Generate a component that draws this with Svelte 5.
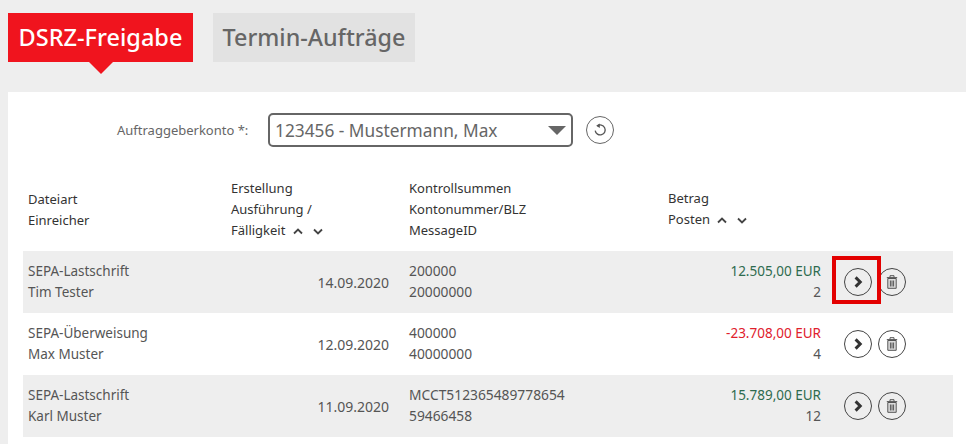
<script>
  const rows = [
    { type: 'SEPA-Lastschrift', name: 'Tim Tester', date: '14.09.2020', sum: '200000', blz: '20000000', amount: '12.505,00', count: 2, tone: 'pos', marked: true },
    { type: 'SEPA-Überweisung', name: 'Max Muster', date: '12.09.2020', sum: '400000', blz: '40000000', amount: '-23.708,00', count: 4, tone: 'neg', marked: false },
    { type: 'SEPA-Lastschrift', name: 'Karl Muster', date: '11.09.2020', sum: 'MCCT512365489778654', blz: '59466458', amount: '15.789,00', count: 12, tone: 'pos', marked: false }
  ];
</script>

{#snippet sort()}
  <span class="sort">
    <svg width="10" height="7" viewBox="0 0 10 7"><path d="M1 5.500 5 1.500l4 4" /></svg>
    <svg width="10" height="7" viewBox="0 0 10 7"><path d="M1 1.500l4 4 4-4" /></svg>
  </span>
{/snippet}

<div class="page">
  <nav class="tabs">
    <button class="tab active">DSRZ-Freigabe</button>
    <button class="tab">Termin-Aufträge</button>
  </nav>

  <main class="panel">
    <div class="filter">
      <label for="konto">Auftraggeberkonto *:</label>
      <div class="select" id="konto">
        <span>123456 - Mustermann, Max</span>
        <i class="caret"></i>
      </div>
      <button class="round reset" aria-label="Zurücksetzen">
        <svg width="16" height="16" viewBox="0 0 16 16">
          <path d="M5.200 3.900A5 5 0 1 1 3.200 8.600" />
          <path class="solid" d="M7.800 1.400v4.600L4.200 3.700z" />
        </svg>
      </button>
    </div>

    <div class="grid head">
      <div class="c1">Dateiart<br />Einreicher</div>
      <div class="c2">Erstellung<br />Ausführung /<br />Fälligkeit {@render sort()}</div>
      <div class="c3">Kontrollsummen<br />Kontonummer/BLZ<br />MessageID</div>
      <div class="c4">Betrag<br />Posten {@render sort()}</div>
    </div>

    {#each rows as row, i}
      <div class="grid row" class:odd={i % 2 === 0}>
        <div class="c1">{row.type}<br />{row.name}</div>
        <div class="c2 date">{row.date}</div>
        <div class="c3 sums">{row.sum}<br />{row.blz}</div>
        <div class="c4 amount"><span class={row.tone}>{row.amount} EUR</span><br />{row.count}</div>
        <div class="actions">
          <span class="open" class:marked={row.marked}>
            <button class="round" aria-label="Öffnen">
              <svg width="12" height="12" viewBox="0 0 12 12"><path class="chev" d="M3.600 1.400 8.200 6l-4.600 4.600" /></svg>
            </button>
          </span>
          <button class="round" aria-label="Löschen">
            <svg width="14" height="16" viewBox="0 0 14 16">
              <path class="body" d="M2.800 4.500h8.400v9.800H2.800z" />
              <path class="thin" d="M1.800 3.600h10.400M5 3.400V1.700h4v1.700M5.400 6.500v6M7 6.500v6M8.600 6.500v6" />
            </svg>
          </button>
        </div>
      </div>
    {/each}
  </main>
</div>

<style>
  :global(body) {
    background: #eee;
  }

  .page {
    height: 444px;
    overflow: hidden;
    font-family: "Noto Sans", sans-serif;
    font-size: 13px;
    line-height: 21px;
    color: #333;
  }

  .tabs {
    display: flex;
    gap: 20px;
    padding: 13px 0 0 8px;
    height: 92px;
    box-sizing: border-box;
  }

  .tab {
    position: relative;
    width: 202px;
    height: 49px;
    padding: 0;
    border: 0;
    background: #e2e2e2;
    color: #666;
    font: 500 23.300px/47px "Noto Sans", sans-serif;
  }

  .tab.active {
    width: 185px;
    background: #f0141e;
    color: #fff;
    font-size: 23.500px;
  }

  .tab.active::after {
    content: '';
    position: absolute;
    left: 50%;
    bottom: -12px;
    margin-left: -12px;
    border: 12px solid transparent;
    border-bottom: 0;
    border-top-color: #f0141e;
  }

  .panel {
    margin-left: 8px;
    background: #fff;
    height: 352px;
    box-sizing: border-box;
    padding: 21px 13px 0 15px;
  }

  .filter {
    display: flex;
    align-items: center;
    height: 34px;
    padding-left: 94px;
  }

  .filter label {
    width: 151px;
    color: #666;
  }

  .select {
    width: 305px;
    height: 34px;
    box-sizing: border-box;
    display: flex;
    align-items: center;
    justify-content: space-between;
    padding: 0 5px;
    border: 2px solid #666;
    border-radius: 5px;
    color: #666;
    font-size: 17.300px;
  }

  .caret {
    border: 9px solid transparent;
    border-bottom: 0;
    border-top: 9px solid #666;
  }

  .round {
    width: 28px;
    height: 28px;
    padding: 0;
    display: flex;
    align-items: center;
    justify-content: center;
    background: transparent;
    border: 1px solid #444;
    border-radius: 50%;
  }

  .reset {
    margin-left: 13px;
    border-color: #666;
  }

  .reset path {
    fill: none;
    stroke: #555;
    stroke-width: 1.300;
  }

  .reset path.solid {
    fill: #555;
    stroke: none;
  }

  .grid {
    display: grid;
    grid-template-columns: 203px 178px 259px 1fr;
    align-items: center;
  }

  .head {
    height: 83px;
    margin-top: 21px;
    margin-left: 5px;
  }

  .head .c4 {
    padding-bottom: 2px;
  }

  .sort {
    display: inline-flex;
    gap: 10px;
    margin-left: 4px;
  }

  .sort path {
    fill: none;
    stroke: #444;
    stroke-width: 1.800;
  }

  .row {
    height: 62px;
    padding-left: 5px;
    color: #555;
    font-size: 13.500px;
    position: relative;
  }

  .row.odd {
    background: #eee;
  }

  .date {
    text-align: right;
    padding-right: 20px;
    font-size: 14px;
  }

  .sums {
    font-size: 13.800px;
    padding-bottom: 2px;
  }

  .amount {
    text-align: right;
    width: 153px;
  }

  .pos {
    color: #2e6b4f;
  }

  .neg {
    color: #e0202c;
  }

  .actions {
    position: absolute;
    left: 821px;
    top: 17px;
    display: flex;
    gap: 6px;
  }

  .open {
    display: block;
  }

  .open.marked::after {
    content: '';
    position: absolute;
    left: -12px;
    top: -12px;
    width: 49px;
    height: 48px;
    box-sizing: border-box;
    border: 4px solid #e30000;
    pointer-events: none;
  }

  .chev {
    fill: none;
    stroke: #333;
    stroke-width: 3;
  }

  .body {
    fill: #ddd;
    stroke: #555;
    stroke-width: 1;
  }

  .thin {
    fill: none;
    stroke: #555;
    stroke-width: 1;
  }
</style>
